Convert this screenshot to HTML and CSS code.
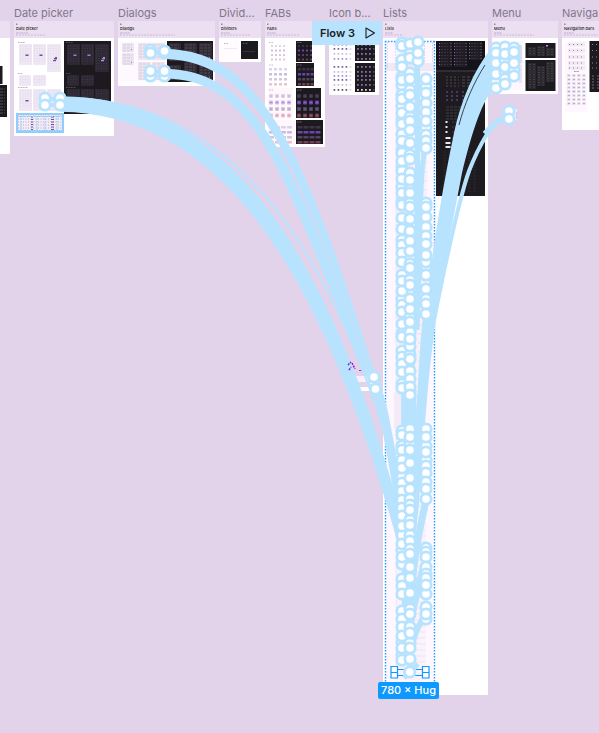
FILE: index.html
```
<!DOCTYPE html>
<html lang="en">
<head>
<meta charset="utf-8">
<title>Prototype canvas</title>
<link rel="stylesheet" href="styles.css">
</head>
<body>
<main class="canvas">
  <section class="frame edge"><header></header></section>
  <section class="frame date"><h2>Date picker</h2><header><h3>Date picker</h3></header></section>
  <section class="frame dialogs"><h2>Dialogs</h2><header><h3>Dialogs</h3></header></section>
  <section class="frame dividers"><h2>Divid...</h2><header><h3>Dividers</h3></header></section>
  <section class="frame fabs"><h2>FABs</h2><header><h3>FABs</h3></header></section>
  <section class="frame icons"><h2>Icon b...</h2><header></header></section>
  <section class="frame lists"><h2>Lists</h2><header><h3>Lists</h3></header></section>
  <section class="frame menu"><h2>Menu</h2><header><h3>Menu</h3></header></section>
  <section class="frame nav"><h2>Naviga</h2><header><h3>Navigation bars</h3></header></section>
  <svg class="layer" id="thumbs" width="599" height="733" aria-hidden="true"></svg>
  <svg class="layer" id="links" width="599" height="733" aria-hidden="true"></svg>
  <button class="flow" type="button">Flow 3
    <svg width="12" height="12" viewBox="0 0 12 12" aria-hidden="true"><path d="M2 1L10.500 6L2 11Z" fill="none" stroke="#1e1e1e" stroke-width="1.100" stroke-linejoin="round"/></svg>
  </button>
  <div class="size">780 × Hug</div>
</main>
<script src="canvas.js"></script>
</body>
</html>
```
FILE: styles.css
```
* { box-sizing: border-box; }
body {
  margin: 0;
  font-family: Inter, "Liberation Sans", sans-serif;
}
.canvas {
  position: relative;
  min-height: 100vh;
  overflow: hidden;
  background: #e2d3eb;
}
.frame {
  position: absolute;
  top: 21px;
  background: #fff;
  border-radius: 1px;
}
.frame header {
  height: 17px;
  padding: 5px 2px 0;
  background: #ebdff1;
}
.frame h2 {
  position: absolute;
  left: 0;
  bottom: 100%;
  margin: 0;
  color: #81768a;
  font-size: 11px;
  font-weight: 400;
  line-height: 16px;
  white-space: nowrap;
}
.frame h3 {
  margin: 0;
  color: #1d1b20;
  font-size: 4px;
  font-weight: 500;
  line-height: 6px;
  white-space: nowrap;
}
.edge { left: -30px; width: 40px; height: 133px; }
.date { left: 14px; width: 100px; height: 115px; }
.dialogs { left: 118px; width: 97px; height: 65px; }
.dividers { left: 219px; width: 42px; height: 41px; }
.fabs { left: 265px; width: 60px; height: 126px; }
.icons { left: 329px; width: 50px; height: 74px; }
.lists { left: 383px; width: 105px; height: 674px; }
.menu { left: 492px; width: 66px; height: 73px; }
.nav { left: 562px; width: 80px; height: 109px; }
.layer {
  position: absolute;
  left: 0;
  top: 0;
}
.flow {
  position: absolute;
  left: 312px;
  top: 21px;
  display: flex;
  align-items: center;
  gap: 9px;
  height: 24px;
  padding: 0 6px 0 8px;
  border: 0;
  background: #b8e3ff;
  color: #1e1e1e;
  font: 600 11px/16px Inter, "Liberation Sans", sans-serif;
  white-space: nowrap;
}
.size {
  position: absolute;
  left: 378px;
  top: 682px;
  padding: 0 3px;
  border-radius: 2px;
  background: #0d99ff;
  color: #fff;
  font-size: 11px;
  font-weight: 500;
  line-height: 17px;
  white-space: nowrap;
}
```
FILE: canvas.js
```
const out = [];
const rect = (x, y, w, h, fill, rx = 0) =>
  out.push(`<rect x="${x}" y="${y}" width="${w}" height="${h}" fill="${fill}" rx="${rx}"/>`);
const line = (x, y, w, color, dash = "2 1", t = 1) =>
  out.push(`<path d="M${x} ${y}h${w}" stroke="${color}" stroke-width="${t}" stroke-dasharray="${dash}"/>`);
const lines = (x, y, w, rows, step, color, dash, t) => {
  for (let i = 0; i < rows; i++) line(x, y + i * step, w, color, dash, t);
};
// One colour per row of a swatch grid.
const grid = (x, y, cols, dx, dy, w, h, colors, rx = 0.5) =>
  colors.forEach((c, r) => {
    for (let i = 0; i < cols; i++) rect(x + i * dx, y + r * dy, w, h, c, rx);
  });

// Header captions
[[16, 12, 30], [120, 10, 55], [221, 9, 30], [267, 9, 33], [385, 8, 18], [494, 8, 40], [564, 10, 34]].forEach(([x, a, b]) => {
  rect(x, 23.5, 1.5, 1.5, "#938a99");
  line(x, 33, a, "#b29ddc", "2 .5", 0.8);
  line(x, 35, b, "#b8adbf", "2 1", 0.7);
});

// Left edge
rect(0, 66, 2.5, 18, "#1b191f");
rect(0, 85, 7, 32, "#1b191f");
lines(0, 89, 5, 9, 3, "#57505f", "3 1");

// Date picker
const calendar = (x, y, w, h, dark) => {
  rect(x, y, w, h, dark ? "#2d2833" : "#efe8f4", 1);
  lines(x + 1, y + 2, w - 2, Math.floor((h - 3) / 2.5), 2.5, dark ? "#4d4655" : "#d5cddc", "1 1.500", 0.6);
  if (h > 12) {
    rect(x + w * 0.5, y + h * 0.5, 3, 1.5, dark ? "#9c7bd0" : "#6750a4");
  }
};
rect(64, 41, 47, 73, "#1c1a1f");
[[0, false], [48, true]].forEach(([o, dark]) => {
  [[19, 44, 13, 21], [33, 44, 13, 21], [47, 44, 14, 28], [19, 75, 12, 11], [33, 75, 13, 11],
   [19, 89, 13, 22], [33, 89, 13, 22], [47, 89, 14, 22]].forEach(([x, y, w, h]) => calendar(x + o, y, w, h, dark));
  line(18 + o, 42.5, 7, "#7d7682", "1 .6", 0.6);
  line(18 + o, 73.5, 5, "#7d7682", "1 .6", 0.6);
  line(18 + o, 87.5, 10, "#7d7682", "1 .6", 0.6);
  rect(53 + o, 60, 3, 1.2, dark ? "#b993ee" : "#6750a4");
  rect(55 + o, 57, 2, 1.2, dark ? "#b993ee" : "#6750a4");
});
rect(17, 114, 46, 18, "#f3ecf7");
lines(18, 116, 44, 6, 3, "#a89eb2", "1 1.500", 0.8);
lines(31, 117, 3, 6, 2.5, "#6750a4", "2 1");
lines(51, 117, 4, 6, 2.5, "#6750a4", "3 1");
out.push('<path d="M17 114h46v18H17z" fill="none" stroke="#8bceff" stroke-width="2"/><path d="M19 116.500H62M19 130.500H62M21 116v14M37 116v14M45 116v14M57 116v14" stroke="#81caff" stroke-dasharray="1.500 1"/>');

// Dialogs
rect(120, 41, 47, 41, "#fef9ff");
rect(167, 41, 46, 41, "#1c1a1f");
const dialog = (x, y, w, h, dark) => {
  rect(x, y, w, h, dark ? "#302b35" : "#ece5f1", 1);
  lines(x + 1, y + 2, w - 3, Math.floor(h / 3), 3, dark ? "#625969" : "#cbc2d3", "3 1", 0.7);
  rect(x + w - 3, y + h - 3, 1, 1, "#9877cf");
};
[[122, 43, 12, 9], [122, 53, 12, 12], [138, 43, 13, 17], [152, 43, 13, 17], [138, 62, 13, 18], [152, 62, 13, 18]]
  .forEach(d => dialog(...d, false));
[[169, 43, 12, 18], [184, 43, 13, 17], [199, 43, 13, 17], [169, 65, 12, 15], [184, 62, 13, 18], [199, 62, 13, 18]]
  .forEach(d => dialog(...d, true));

// Dividers
rect(221, 41, 18, 18, "#fffbff");
rect(241, 41, 17, 18, "#1c1a1f");
line(224, 43.5, 4, "#948b99", "1 .5", 0.6);
line(224, 48.5, 13, "#ddd5e2", "20 1", 0.5);
line(243, 43.5, 5, "#777", "1 .5", 0.6);
line(243, 51.5, 12, "#4e4953", "20 1", 0.5);

// FABs
const pale = ["#ded3e6", "#cdb7e8", "#cfc7da", "#ebc0d0"];
const deep = ["#3c3543", "#7042af", "#514662", "#743e55"];
rect(296, 41, 16, 21, "#1c1a1f");
rect(296, 63, 18, 23, "#1c1a1f");
rect(296, 88, 25, 30, "#1c1a1f");
rect(296, 120, 27, 24, "#1c1a1f");
rect(268, 88, 25, 30, "#fef8fd");
rect(268, 120, 27, 24, "#fef8fd");
grid(271, 45, 4, 4, 4.5, 2, 2, pale);
grid(298, 45, 4, 4, 4.5, 2, 2, deep);
grid(269, 68, 4, 5, 5, 3, 2.5, pale);
grid(298, 68, 4, 4.2, 5, 3, 2.5, deep);
grid(269, 94, 4, 6, 6.5, 4, 4, pale, 1);
grid(297, 94, 4, 6, 6.5, 4, 4, deep, 1);
grid(270.5, 95.5, 4, 6, 6.5, 1, 1, ["#87798f", "#744bae", "#6d617b", "#b65279"]);
grid(298.5, 95.5, 4, 6, 6.5, 1, 1, ["#82778c", "#c49aff", "#a99bbd", "#cf899e"]);
grid(269, 126, 4, 6, 5, 5, 2.5, pale);
grid(297.5, 126, 4, 6, 5, 5, 2.5, deep);
[42.5, 65, 90, 122].forEach(y => {
  line(269, y, 4, "#9c91a2", "1 .5", 0.6);
  line(297, y, 5, "#9c91a2", "1 .5", 0.6);
});

// Icon buttons
rect(355, 41, 20, 20, "#1c1a1f");
rect(355, 63, 20, 29, "#1c1a1f");
[44, 48, 53, 58, 66, 71, 75, 79, 84, 89].forEach((y, i) => {
  const light = i === 9 ? "#5e5662" : ["#ad91d5", "#765fa5", "#cbbcdb"][i % 3];
  for (let k = 0; k < 5; k++) {
    rect(333.5 + k * 4, y, 1.8, 1.8, k === 4 ? "#ddd2e3" : light, 0.5);
    rect(357 + k * 4, y, 1.8, 1.8, k === 4 ? "#534c59" : i === 9 ? "#eee" : "#9378b8", 0.5);
  }
});

// Lists
rect(385, 41, 50, 642, "#fef7ff");
rect(385, 63, 50, 8, "#f1e8f5");
rect(395, 72, 32, 320, "#f8f0fa");
rect(394, 392, 9, 37, "#f4ebf6");
rect(395, 428, 31, 252, "#faf3fc");
lines(387, 43, 10, 9, 3, "#cfc1dc", "1 7", 1);
lines(424, 43, 9, 7, 3, "#c5b7d3", "1 7", 1);
lines(396, 75, 2, 104, 3, "#d4ccd9", "1 1", 0.6);
lines(418, 100, 10, 32, 9, "#ded5e2", "8 1", 0.6);
lines(412, 500, 14, 28, 6, "#e6dceb", "14 1", 0.6);
lines(396, 430, 2, 80, 3, "#d1c8d7", "1 1", 0.6);
rect(436, 41, 49, 155, "#1d1b20");
rect(436, 41, 49, 29, "#151318");
rect(436, 70, 49, 2, "#302d34");
[439, 454, 469].forEach((x, i) => {
  rect(x, 42, 13, i === 2 ? 18 : 25, "#201d25");
  for (let k = 0; k < (i === 2 ? 6 : 8); k++) {
    line(x + 2, 43.5 + k * 3, 7, "#494350", "2 1", 0.6);
    rect(x, 43 + k * 3, 1, 1, i === 2 ? "#77717d" : "#8d5ccc");
    rect(x + 11.5, 43 + k * 3, 1, 1, "#776982");
  }
});
lines(446, 77, 13, 4, 3, "#625d66", "2 2", 0.7);
lines(462, 77, 14, 4, 3, "#625d66", "3 2", 0.7);
[92, 96, 100].forEach(y => {
  line(446, y, 14, "#7950a6", "2 3");
  line(462, y, 10, "#7950a6", "2 3");
});
lines(446, 107, 16, 5, 3, "#5b555e", "3 1", 0.6);
[[121, 2], [126, 2], [131, 2], [137, 5], [142, 5], [146, 5]].forEach(([y, w]) => {
  rect(445.5, y, w, 2, "#ece7ee");
  line(452, y + 1, 10, "#645d68", "2 1", 0.6);
});
lines(443, 152, 34, 14, 3, "#39343d", "3 2", 0.6);

// Menu
rect(494, 41, 29, 49, "#fef7ff");
rect(519, 45, 3, 18, "#e6ddec");
rect(519, 65, 3, 18, "#eee5f2");
rect(525.5, 43, 30, 15, "#1c1a1f");
rect(525.5, 60, 30, 31, "#1c1a1f");
[[528, 47, 8, 9], [537, 46, 8, 10], [546, 48, 8, 8], [528, 63, 8, 26], [537, 66, 8, 20], [546, 62, 8, 20]].forEach(([x, y, w, h]) => {
  rect(x, y, w, h, "#2a272d");
  lines(x + 1, y + 1.5, 6, Math.floor(h / 2.5), 2.5, "#55505a", "2 2", 0.6);
});
rect(546, 45, 2, 1.5, "#bd91ed");
rect(514, 109, 3, 11, "#f4ebf7");
rect(516, 112, 1, 7, "#d7c8e0");

// Navigation
rect(565, 41, 22, 71, "#fef7ff");
rect(589.5, 41, 12, 51, "#1c1a1f");
[42.5, 48.5, 55, 61, 66].forEach((y, i) => {
  rect(568, y, 17, 4, "#f1e9f4");
  line(569, y + 2, 15, i === 1 ? "#df7189" : "#8b7d98", "1 3");
  line(592, y + 2, 7, "#9180a7", "1 3");
});
line(574, 71.5, 5, "#817986", "1 .3", 0.8);
for (let r = 0; r < 8; r++) {
  for (let k = 0; k < 4; k++) {
    rect(567 + k * 5, 74 + r * 4, 3.5, 3, r === 4 ? "#dce0f0" : "#e9dfed");
    rect(568.5 + k * 5, 75 + r * 4, 1, 1, (r + k) % 3 ? "#887a93" : "#aa8cc4");
  }
}
lines(592, 76, 7, 5, 3, "#75647f", "2 3");

// Loose component on the canvas
line(359, 370.5, 7, "#9130df", "2 .7");
rect(345, 376, 28, 6, "#f7f0fa");
rect(348, 387, 25, 4, "#fff");
line(344, 380, 2, "#b7a8be");
document.getElementById("thumbs").innerHTML = out.join("");

// Prototype links
const wire = "#b8e3ff";
const link = [];
const stroke = (d, w = 4) => link.push(`<path d="${d}" fill="none" stroke="${wire}" stroke-width="${w}"/>`);
const fill = d => link.push(`<path d="${d}" fill="${wire}"/>`);

link.push('<path d="M385.500 41V683M434.500 41V683M385 41.500H435" stroke="#1a9ffb" stroke-width="1.400" stroke-dasharray="1.500 1.500" fill="none"/>');
for (let i = 0; i < 6; i++) {
  stroke(`M60 ${98 + i * 2.4}C${222 - i * 1.5} ${98 + i * 2.8} ${328 - i * 1.6} ${245 + i * 1.6} ${403 - i * 0.3} ${530 + i * 4}`, 3.6);
}
stroke("M60 98C226 96 335 238 405 502", 2);
for (let i = 0; i < 3; i++) {
  stroke(`M165 ${51 + i * 3}C${265 + i} ${51 + i * 4} ${308 - i * 3} ${170 + i * 5} 374 377`, 3.8);
  stroke(`M165 ${71 + i * 2.8}C${262 + i * 2} ${71 + i * 3} ${300 - i * 5} ${184 + i * 8} 374 389`, 3.8);
}
stroke("M374 377C386 395 390 440 404 505", 4);
stroke("M373 380C388 430 394 480 404 540", 6);
fill("M492 47C474 70 461 100 454 133C440 200 432 257 428 290C422 345 419 385 415 425L404 540L414 545L419 505C427 398 429 370 435 327C442 275 455 210 462 173C470 140 480 105 492 91Z");
stroke("M505 116C492 121 478 148 469 171C457 205 443 275 434 320", 4);
stroke("M509 115C500 118 490 128 485 134", 6);
link.push('<path d="M485 65C474 82 464 105 459 125" fill="none" stroke="#1d1b20" stroke-width=".8"/>');
fill("M401 390H416.500V540L413 625H402Z");
stroke("M417.500 60V200C417 280 413 350 410 420", 5);
stroke("M425 148C419 180 421 230 417 330", 5);
stroke("M426 315C420 370 421 420 412 500", 6);
stroke("M426 500C421 525 414 550 411 600", 7);
stroke("M426 560C418 590 413 600 409 630", 8);
stroke("M426 615C416 628 411 640 410 668", 6);
stroke("M45 99H60M45 105H60", 4);
stroke("M151 53H165M151 72H165", 4);

const columns = [
  [402, [43, 60, 77, 85, 95, 106, 120, 134, 150, 167, 171, 187, 202, 240, 275, 299, 334, 351, 384, 431, 446, 477, 535, 550, 564, 642, 655, 46, 67, 80, 99, 113, 124, 141, 153, 161, 179, 193, 205, 218, 229, 245, 253, 262, 281, 291, 305, 312, 324, 337, 357, 364, 372, 388, 435, 450, 460, 468, 483, 491, 500, 508, 516, 526, 544, 557, 579, 586, 594, 611, 619, 627, 636, 648, 660]],
  [410, [44, 54, 73, 90, 117, 155, 173, 185, 219, 264, 280, 317, 332, 355, 371, 444, 450, 520, 535, 541, 573, 609, 627, 643, 58, 79, 95, 107, 121, 130, 143, 159, 180, 190, 203, 207, 193, 231, 241, 251, 268, 285, 299, 309, 322, 346, 339, 359, 379, 387, 395, 429, 437, 463, 478, 489, 499, 505, 510, 525, 549, 554, 567, 593, 578, 614, 633, 648, 659]],
  [418, [42, 61, 53]],
  [426, [87, 103, 127, 135, 141, 203, 217, 266, 79, 93, 112, 121, 148, 207, 227, 236, 244, 262, 255, 275, 289, 299, 304, 314, 429, 446, 460, 437, 452, 466, 473, 482, 489, 499, 548, 552, 557, 567, 574, 578, 594, 585, 607, 619, 614]],
  [496, [48, 58, 69, 82, 53, 63, 74, 88]],
  [505, [47, 60, 72, 79, 54, 67, 84]],
  [514, [48, 58, 70, 52, 63, 76]],
  [509, [111, 119]], [45, [98, 105]], [60, [98, 105]],
  [150.5, [50, 53, 76, 71]], [164.5, [53, 51, 76, 71]],
  [374, [382, 377]], [375.5, [389]]
];
columns.forEach(([x, ys]) => ys.forEach(y =>
  link.push(`<circle cx="${x}" cy="${y}" r="5.200" fill="#fff" stroke="${wire}" stroke-width="2.800"/>`)));

link.push('<path d="M348 365l3-3M349 370l2-3M352 363l3 6" stroke="#8418d9" stroke-width="1.500" stroke-dasharray="2 1"/>');

// Selected row with its side handles
link.push('<path d="M397 669.500H422M397 675.500H422" stroke="#0d99ff"/>');
link.push(`<path d="M404 678L418 664" stroke="${wire}" stroke-width="5"/><circle cx="409.700" cy="672" r="5.200" fill="#fff" stroke="${wire}" stroke-width="2.800"/>`);
link.push('<path d="M391 666.500h6.500v11.500h-6.500zM391 672.500h6.500M422.500 666.500h6.500v11.500h-6.500zM422.500 672.500h6.500" fill="#fff" stroke="#0d99ff" stroke-width="1.200"/>');
document.getElementById("links").innerHTML = link.join("");
```
